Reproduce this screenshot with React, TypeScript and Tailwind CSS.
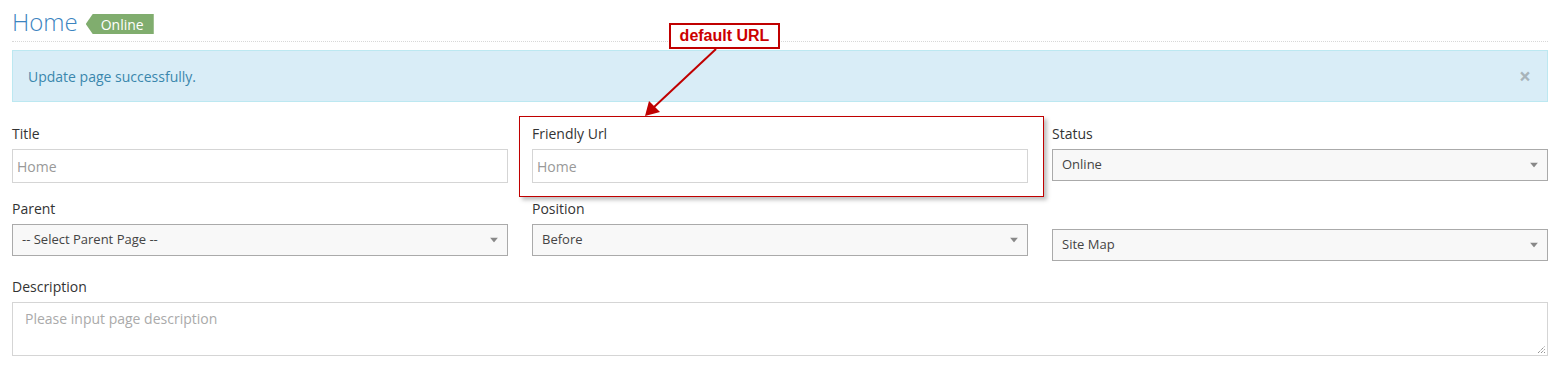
import React from "react";

const FONT = { fontFamily: '"Open Sans", "Noto Sans", sans-serif' };

function Caret() {
  return (
    <svg width="8" height="5" viewBox="0 0 8 5" className="absolute right-[9px] top-1/2 -translate-y-1/2">
      <path d="M0 0 L8 0 L4 5 Z" fill="#888" />
    </svg>
  );
}

function FakeSelect({ value }: { value: string }) {
  return (
    <div className="relative h-[32px] border border-[#aaa] bg-[#f8f8f8] pl-[9px] flex items-center text-[13px] text-[#444]">
      {value}
      <Caret />
    </div>
  );
}

function Label({ children }: { children: React.ReactNode }) {
  return <div className="text-[14px] leading-[20px] text-[#333] mb-[5px]">{children}</div>;
}

function TextInput({ placeholder }: { placeholder: string }) {
  return (
    <div className="h-[34px] border border-[#d5d5d5] bg-white pl-[4px] flex items-center text-[14px] text-[#999]">
      {placeholder}
    </div>
  );
}

export default function App() {
  return (
    <div className="relative w-[1566px] h-[370px] bg-white pl-3 pr-[18px] overflow-hidden" style={FONT}>
      {/* Header */}
      <div className="h-[42px] flex items-start border-b border-dotted border-[#d8d8d8]">
        <h1 className="mt-[6px] h-[32px] leading-[32px] text-[24px] font-light text-[#3c84bf]">Home</h1>
        <span
          className="ml-[8px] mt-[14px] h-[20px] w-[68px] bg-[#80ad6e] text-white text-[14px] font-medium flex items-center pl-[15px]"
          style={{ clipPath: "polygon(0 50%, 7px 0, 100% 0, 100% 100%, 7px 100%)" }}
        >
          Online
        </span>
      </div>

      {/* Alert */}
      <div className="mt-[8px] h-[52px] border border-[#bce8f1] bg-[#d9edf7] pl-[15px] pr-[16px] flex items-center justify-between text-[14px] text-[#3a87ad]">
        <span>Update page successfully.</span>
        <span className="text-[21px] font-bold text-[#a8b4ba] leading-none">×</span>
      </div>

      {/* Form */}
      <div className="mt-[22px] grid grid-cols-3 gap-x-6">
        <div>
          <Label>Title</Label>
          <TextInput placeholder="Home" />
        </div>
        <div>
          <Label>Friendly Url</Label>
          <TextInput placeholder="Home" />
        </div>
        <div>
          <Label>Status</Label>
          <FakeSelect value="Online" />
        </div>

        <div className="mt-[16px]">
          <Label>Parent</Label>
          <FakeSelect value="-- Select Parent Page --" />
        </div>
        <div className="mt-[16px]">
          <Label>Position</Label>
          <FakeSelect value="Before" />
        </div>
        <div className="mt-[16px] pt-[30px]">
          <FakeSelect value="Site Map" />
        </div>

        <div className="col-span-3 mt-[16px]">
          <Label>Description</Label>
          <div className="relative h-[54px] border border-[#d5d5d5] bg-white pl-[12px] pt-[6px] text-[14px] leading-[20px] text-[#aaa]">
            Please input page description
            <svg width="8" height="8" viewBox="0 0 8 8" className="absolute right-[2px] bottom-[2px]">
              <path d="M1 8 L8 1 M4 8 L8 4 M7 8 L8 7" stroke="#666" strokeWidth="1" strokeDasharray="1 1" />
            </svg>
          </div>
        </div>
      </div>

      {/* Annotation overlay */}
      <div className="absolute left-[519px] top-[116px] w-[525px] h-[81px] border border-[#c00000] shadow-[3px_3px_4px_rgba(0,0,0,0.25)]" />
      <div
        className="absolute left-[669px] top-[23px] w-[111px] h-[26px] border-2 border-[#c00000] bg-white flex items-center justify-center text-[16px] font-bold text-[#cc0000]"
        style={{ fontFamily: '"Liberation Sans", Arial, sans-serif' }}
      >
        default URL
      </div>
      <svg className="absolute left-0 top-0 pointer-events-none" width="1566" height="370">
        <line x1="716" y1="49" x2="653" y2="108" stroke="#c00000" strokeWidth="2" />
        <path d="M645 116 L649 101 L660 112 Z" fill="#c00000" />
      </svg>
    </div>
  );
}
